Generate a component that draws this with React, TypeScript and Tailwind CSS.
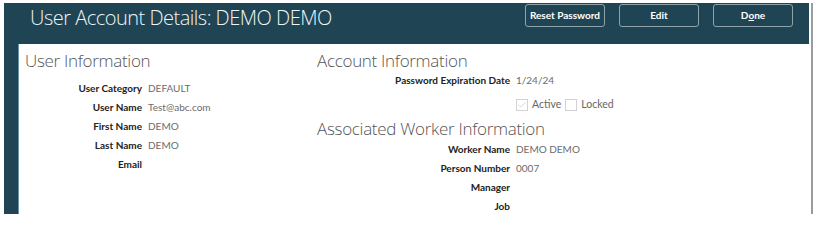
import { Check } from "lucide-react";

const font = { fontFamily: 'Lato, "Open Sans", sans-serif' };
const light = { fontFamily: '"Open Sans", Lato, sans-serif' };

function Field({ label, value, w }: { label: string; value?: string; w: string }) {
  return (
    <div className="flex h-[19px] items-center text-[10px] leading-none">
      <span className={`${w} shrink-0 whitespace-nowrap text-right font-bold text-[#222]`}>{label}</span>
      <span className="ml-[6px] text-[#6b6b6b]">{value}</span>
    </div>
  );
}

function Box({ checked, label }: { checked?: boolean; label: string }) {
  return (
    <span className="flex items-center text-[10.5px] text-[#666]">
      <span className="mr-[4px] flex h-[12px] w-[12px] items-center justify-center border border-[#d2d2d2] bg-white">
        {checked && <Check size={10} strokeWidth={1.5} className="text-[#c0c0c0]" />}
      </span>
      {label}
    </span>
  );
}

function Heading({ children, className = "" }: { children: string; className?: string }) {
  return (
    <h2
      className={`whitespace-nowrap text-[17px] font-light leading-[24px] tracking-[-0.3px] text-[#555] ${className}`}
      style={light}
    >
      {children}
    </h2>
  );
}

export default function App() {
  return (
    <div className="flex pl-[4px] pt-[3px]" style={font}>
      <div className="flex h-[211px] w-[805px] flex-col bg-[#1f4555]">
        <div className="flex h-[41px] shrink-0 items-start">
          <h1
            className="ml-[26px] mt-[1px] whitespace-nowrap text-[20px] font-light leading-[28px] tracking-[-0.5px] text-[#f1f4f5]"
            style={light}
          >
            User Account Details: DEMO DEMO
          </h1>
          <div className="ml-auto mr-[16px] flex gap-[14px] pt-[1px]">
            <button className="h-[23px] w-[80px] whitespace-nowrap rounded-[3px] border border-[#8fa3ab] text-[10px] font-bold text-white">
              Reset Password
            </button>
            <button className="h-[23px] w-[80px] rounded-[3px] border border-[#8fa3ab] text-[10px] font-bold text-white">
              Edit
            </button>
            <button className="h-[23px] w-[80px] rounded-[3px] border border-[#8fa3ab] text-[10px] font-bold text-white">
              D<span className="underline">o</span>ne
            </button>
          </div>
        </div>
        <div className="flex flex-1 pl-[14px]">
          <div className="flex flex-1 border-l border-[#6a93a5] bg-white">
            <div className="w-[298px] pl-[6px] pt-[5px]">
              <Heading>User Information</Heading>
              <div className="mt-[5px]">
                <Field w="w-[117px]" label="User Category" value="DEFAULT" />
                <Field w="w-[117px]" label="User Name" value="Test@abc.com" />
                <Field w="w-[117px]" label="First Name" value="DEMO" />
                <Field w="w-[117px]" label="Last Name" value="DEMO" />
                <Field w="w-[117px]" label="Email" />
              </div>
            </div>
            <div className="flex-1 pt-[5px]">
              <Heading>Account Information</Heading>
              <div className="-mt-[3px]">
                <Field w="w-[193px]" label="Password Expiration Date" value="1/24/24" />
              </div>
              <div className="ml-[199px] mt-[9px] flex h-[14px] gap-[4px]">
                <Box checked label="Active" />
                <Box label="Locked" />
              </div>
              <Heading className="mt-[5px]">Associated Worker Information</Heading>
              <div className="-mt-[2px]">
                <Field w="w-[193px]" label="Worker Name" value="DEMO DEMO" />
                <Field w="w-[193px]" label="Person Number" value="0007" />
                <Field w="w-[193px]" label="Manager" />
                <Field w="w-[193px]" label="Job" />
              </div>
            </div>
          </div>
        </div>
      </div>
      <div className="ml-[2px] h-[211px] w-[2px] bg-[#9b9b9b]" />
    </div>
  );
}
